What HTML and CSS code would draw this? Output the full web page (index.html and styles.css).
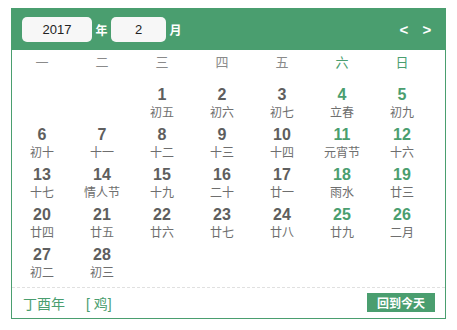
FILE: index.html
```html
<!DOCTYPE html>
<html lang="zh-CN">
<head>
    <meta charset="UTF-8">
    <meta name="viewport" content="width=device-width, initial-scale=1.0">
    <title>万年历</title>
    <link rel="stylesheet" href="styles.css">
</head>
<body>
    <div class="calendar">
        <div class="cal-header">
            <input class="year-input" type="text" value="2017">
            <span class="unit">年</span>
            <input class="month-input" type="text" value="2">
            <span class="unit">月</span>
            <div class="nav">
                <a href="#" class="nav-btn">&lt;</a>
                <a href="#" class="nav-btn">&gt;</a>
            </div>
        </div>
        <div class="weekdays">
            <span>一</span>
            <span>二</span>
            <span>三</span>
            <span>四</span>
            <span>五</span>
            <span class="weekend">六</span>
            <span class="weekend">日</span>
        </div>
        <div class="days">
            <div class="day empty"></div>
            <div class="day empty"></div>
            <div class="day"><b>1</b><small>初五</small></div>
            <div class="day"><b>2</b><small>初六</small></div>
            <div class="day"><b>3</b><small>初七</small></div>
            <div class="day weekend"><b>4</b><small>立春</small></div>
            <div class="day weekend"><b>5</b><small>初九</small></div>

            <div class="day"><b>6</b><small>初十</small></div>
            <div class="day"><b>7</b><small>十一</small></div>
            <div class="day"><b>8</b><small>十二</small></div>
            <div class="day"><b>9</b><small>十三</small></div>
            <div class="day"><b>10</b><small>十四</small></div>
            <div class="day weekend"><b>11</b><small>元宵节</small></div>
            <div class="day weekend"><b>12</b><small>十六</small></div>

            <div class="day"><b>13</b><small>十七</small></div>
            <div class="day"><b>14</b><small>情人节</small></div>
            <div class="day"><b>15</b><small>十九</small></div>
            <div class="day"><b>16</b><small>二十</small></div>
            <div class="day"><b>17</b><small>廿一</small></div>
            <div class="day weekend"><b>18</b><small>雨水</small></div>
            <div class="day weekend"><b>19</b><small>廿三</small></div>

            <div class="day"><b>20</b><small>廿四</small></div>
            <div class="day"><b>21</b><small>廿五</small></div>
            <div class="day"><b>22</b><small>廿六</small></div>
            <div class="day"><b>23</b><small>廿七</small></div>
            <div class="day"><b>24</b><small>廿八</small></div>
            <div class="day weekend"><b>25</b><small>廿九</small></div>
            <div class="day weekend"><b>26</b><small>二月</small></div>

            <div class="day"><b>27</b><small>初二</small></div>
            <div class="day"><b>28</b><small>初三</small></div>
        </div>
        <div class="cal-footer">
            <span class="ganzhi">丁酉年</span>
            <span class="zodiac">[ 鸡]</span>
            <button class="today-btn">回到今天</button>
        </div>
    </div>
</body>
</html>
```

FILE: styles.css
```css
* {
    margin: 0;
    padding: 0;
    box-sizing: border-box;
    font-family: "Liberation Sans", Arial, "Noto Sans CJK SC", sans-serif;
}

body {
    background: #fff;
}

.calendar {
    width: 435px;
    height: 311px;
    margin: 8px 0 0 11px;
    border: 1px solid #4a9e6f;
    border-top: none;
    background: #fff;
}

.cal-header {
    height: 42px;
    margin: 0 -1px;
    padding: 0 11px;
    display: flex;
    align-items: center;
    background-color: #4a9e6f;
}

.cal-header input {
    height: 25px;
    border: none;
    border-radius: 5px;
    background: #f7f7f7;
    text-align: center;
    font-size: 13px;
    color: #222;
    outline: none;
}

.year-input {
    width: 70px;
}

.month-input {
    width: 55px;
}

.unit {
    width: 19px;
    text-align: center;
    color: #fff;
    font-weight: bold;
    font-size: 12px;
    font-family: "Noto Sans CJK SC", sans-serif;
}

.nav {
    margin-left: auto;
    display: flex;
    gap: 9px;
    margin-right: 1px;
}

.nav-btn {
    color: #fff;
    text-decoration: none;
    font-weight: bold;
    font-size: 15px;
    width: 14px;
    text-align: center;
}

.weekdays,
.days {
    display: grid;
    grid-template-columns: repeat(7, 60px);
}

.weekdays {
    height: 24px;
    line-height: 24px;
    margin-top: 1px;
    text-align: center;
    font-size: 13px;
    color: #8a8a8a;
    font-family: "Noto Sans CJK SC", sans-serif;
}

.weekdays .weekend {
    color: #4a9e6f;
}

.days {
    padding: 8px 0 4px;
    grid-auto-rows: 40px;
}

.day {
    padding-top: 3px;
    display: flex;
    flex-direction: column;
    align-items: center;
}

.day b {
    line-height: 18px;
    font-size: 16px;
    color: #5e5e5e;
}

.day small {
    line-height: 16px;
    font-size: 12px;
    color: #6e6e6e;
    font-family: "Noto Sans CJK SC", sans-serif;
}

.day.weekend b {
    color: #4a9e6f;
}

.cal-footer {
    height: 30px;
    border-top: 1px dashed #e0e0e0;
    padding: 0 10px 0 11px;
    display: flex;
    align-items: center;
    font-family: "Noto Sans CJK SC", sans-serif;
}

.ganzhi {
    color: #4a9e6f;
    font-size: 14px;
}

.zodiac {
    margin-left: 21px;
    color: #4a9e6f;
    font-size: 14px;
    white-space: pre;
}

.today-btn {
    margin-left: auto;
    width: 68px;
    height: 19px;
    border: none;
    background-color: #4a9e6f;
    color: #fff;
    font-weight: bold;
    font-size: 12px;
    font-family: "Noto Sans CJK SC", sans-serif;
    cursor: pointer;
}
```
